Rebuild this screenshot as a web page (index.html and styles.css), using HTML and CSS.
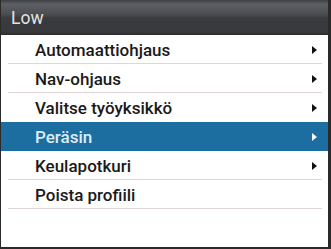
FILE: index.html
```html
<!DOCTYPE html>
<html>
<head>
<meta charset="utf-8">
<link rel="stylesheet" href="styles.css">
</head>
<body>
<div class="panel">
  <div class="header">Low</div>
  <ul class="menu">
    <li class="item"><span>Automaattiohjaus</span><i class="arrow"></i></li>
    <li class="item"><span>Nav-ohjaus</span><i class="arrow"></i></li>
    <li class="item"><span>Valitse työyksikkö</span><i class="arrow"></i></li>
    <li class="item selected"><span>Peräsin</span><i class="arrow"></i></li>
    <li class="item"><span>Keulapotkuri</span><i class="arrow"></i></li>
    <li class="item"><span>Poista profiili</span></li>
  </ul>
</div>
</body>
</html>
```
FILE: styles.css
```css
html, body {
  margin: 0;
  padding: 0;
  background: #ffffff;
}
.panel {
  box-sizing: border-box;
  width: 331px;
  height: 249px;
  background: #ffffff;
  border-left: 1px solid #2a2a2a;
  border-right: 3px solid #2a2a2a;
  border-bottom: 2px solid #2a2a2a;
  font-family: "Roboto", "DejaVu Sans", sans-serif;
  font-weight: 500;
  overflow: hidden;
}
.header {
  height: 35px;
  margin-left: -1px;
  margin-right: -3px;
  box-sizing: border-box;
  padding-left: 11px;
  padding-top: 2px;
  line-height: 33px;
  font-size: 17.5px;
  font-weight: 400;
  color: #e4e4e4;
  background: linear-gradient(to bottom, #3c3e42 0px, #5c5f64 4px, #4c4e52 14px, #3a3b3e 18px, #38393c 32px, #2c2c2e 35px);
}
.menu {
  list-style: none;
  margin: 0;
  padding: 0;
}
.item {
  height: 29px;
  display: flex;
  align-items: center;
  justify-content: space-between;
  margin-left: 7px;
  margin-right: 6px;
  padding-left: 27px;
  padding-right: 5px;
  box-sizing: border-box;
  border-bottom: 1px solid #e3d6da;
  font-size: 17px;
  color: #1a1a1a;
  padding-top: 1px;
}
.item:nth-child(3) {
  border-bottom-color: transparent;
}
.item.selected {
  margin-left: -1px;
  margin-right: -3px;
  padding-left: 35px;
  padding-right: 14px;
  background: #1c6ea0;
  color: #dcecf7;
  border-bottom-color: #1c6ea0;
}
.arrow {
  width: 0;
  height: 0;
  border-top: 4px solid transparent;
  border-bottom: 4px solid transparent;
  border-left: 5px solid #111111;
}
.selected .arrow {
  border-left-color: #f4f8fb;
}
```
